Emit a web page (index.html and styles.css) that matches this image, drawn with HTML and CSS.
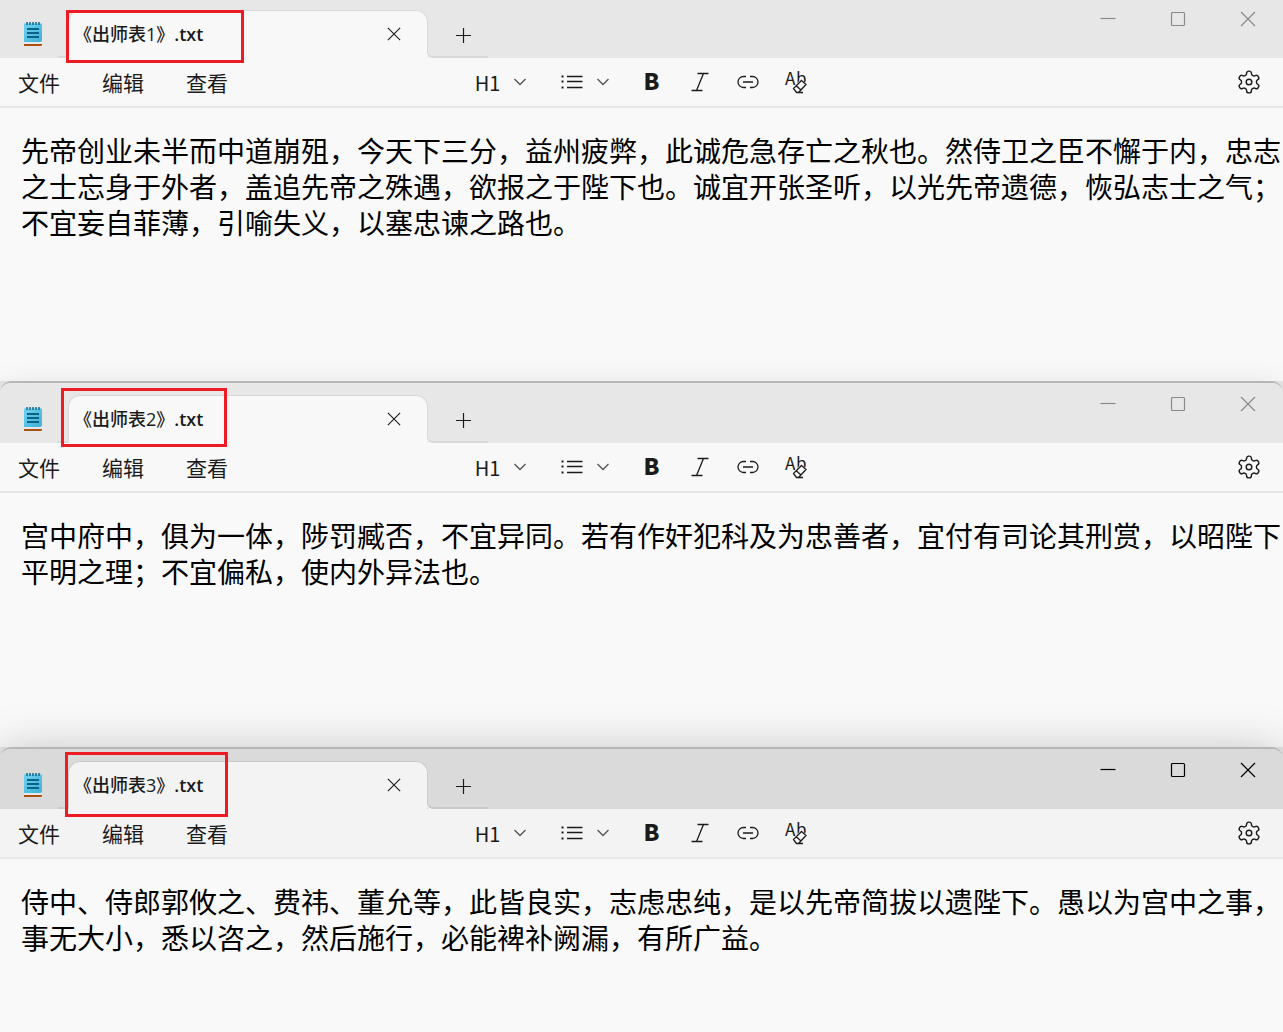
FILE: index.html
```html
<!DOCTYPE html>
<html lang="zh-CN">
<head>
  <meta charset="UTF-8" />
  <meta name="viewport" content="width=device-width, initial-scale=1" />
  <title>《出师表》</title>
  <link rel="stylesheet" href="styles.css">
</head>
<body>
  <!-- shared icons -->
  <svg class="sprite" aria-hidden="true">
    <linearGradient id="page" x1="0" y1="0" x2="1" y2="1">
      <stop offset="0" stop-color="#6fd3f2" />
      <stop offset="1" stop-color="#3fb0d3" />
    </linearGradient>
    <symbol id="notepad" viewBox="0 0 18 24">
      <path d="M0 22h18v.5q0 1.500-1.500 1.500H0z" fill="#a9500f" />
      <path d="M0 20h18v2H0z" fill="#e6e9ea" />
      <path d="M0 1.500h18V18q0 2-2 2H0z" fill="url(#page)" />
      <path d="M3 0v3M6 0v3M9 0v3M12 0v3M15 0v3" stroke="#0f6a8c" stroke-width="1.500" />
      <path d="M3 7h12M3 11h12M3 15h12" stroke="#0a6287" stroke-width="2" />
    </symbol>
    <symbol id="close" viewBox="0 0 16 16"><path d="M1 1l14 14M15 1L1 15" /></symbol>
    <symbol id="plus" viewBox="0 0 16 16"><path d="M8.500 1v15M1 8.500h15" /></symbol>
    <symbol id="minimize" viewBox="0 0 16 16"><path d="M.5 7.500h15" /></symbol>
    <symbol id="maximize" viewBox="0 0 16 16"><rect x="1.500" y="1.500" width="13" height="13" rx="1" /></symbol>
    <symbol id="chevron" viewBox="0 0 12 8"><path d="M.5 1L6 6.500 11.500 1" /></symbol>
    <symbol id="list" viewBox="0 0 22 14">
      <path d="M6 1.500h15.500M6 6.500h15.500M6 12.500h15.500" />
      <path d="M.5 1.500h2M.5 6.500h2M.5 12.500h2" stroke-width="2.200" />
    </symbol>
    <symbol id="italic" viewBox="0 0 18 20"><path d="M6.500 1.500h11M.5 18.500h11M12.500 1.500l-7 17" /></symbol>
    <symbol id="link" viewBox="0 0 22 14">
      <path d="M9 1.500H6.500a5.500 5.500 0 0 0 0 11H9M13 1.500h2.500a5.500 5.500 0 0 1 0 11H13M6 7h10" />
    </symbol>
    <symbol id="gear" viewBox="0 0 24 24">
      <path d="M12.220 2h-.44a2 2 0 0 0-2 2v.18a2 2 0 0 1-1 1.730l-.43.25a2 2 0 0 1-2 0l-.15-.08a2 2 0 0 0-2.730.73l-.22.38a2 2 0 0 0 .73 2.730l.15.1a2 2 0 0 1 1 1.720v.51a2 2 0 0 1-1 1.740l-.15.09a2 2 0 0 0-.73 2.730l.22.38a2 2 0 0 0 2.730.73l.15-.08a2 2 0 0 1 2 0l.43.25a2 2 0 0 1 1 1.730V20a2 2 0 0 0 2 2h.44a2 2 0 0 0 2-2v-.18a2 2 0 0 1 1-1.730l.43-.25a2 2 0 0 1 2 0l.15.08a2 2 0 0 0 2.730-.73l.22-.39a2 2 0 0 0-.73-2.730l-.15-.08a2 2 0 0 1-1-1.740v-.5a2 2 0 0 1 1-1.740l.15-.09a2 2 0 0 0 .73-2.730l-.22-.38a2 2 0 0 0-2.730-.73l-.15.08a2 2 0 0 1-2 0l-.43-.25a2 2 0 0 1-1-1.730V4a2 2 0 0 0-2-2z" />
      <circle cx="12" cy="12" r="2.600" />
    </symbol>
  </svg>

  <section class="window first">
    <header class="titlebar">
      <svg class="app-icon"><use href="#notepad" /></svg>
      <div class="tab">
        <span class="tab-name">《出师表1》<b>.txt</b></span>
        <button class="tab-close" aria-label="关闭标签页"><svg class="icon-14"><use href="#close" /></svg></button>
      </div>
      <button class="tab-new" aria-label="新建标签页"><svg class="icon-16"><use href="#plus" /></svg></button>
      <div class="controls">
        <button aria-label="最小化"><svg class="icon-16"><use href="#minimize" /></svg></button>
        <button aria-label="最大化"><svg class="icon-16"><use href="#maximize" /></svg></button>
        <button aria-label="关闭"><svg class="icon-16"><use href="#close" /></svg></button>
      </div>
    </header>
    <div class="toolbar">
      <nav class="menu">
        <button>文件</button>
        <button>编辑</button>
        <button>查看</button>
      </nav>
      <div class="tools">
        <button class="drop">H1<svg class="chevron"><use href="#chevron" /></svg></button>
        <button class="drop" aria-label="列表"><svg class="icon-wide"><use href="#list" /></svg><svg class="chevron"><use href="#chevron" /></svg></button>
        <button class="bold">B</button>
        <button aria-label="斜体"><svg class="icon-italic"><use href="#italic" /></svg></button>
        <button aria-label="链接"><svg class="icon-wide"><use href="#link" /></svg></button>
        <button aria-label="清除格式">
          <svg class="icon-24" viewBox="0 0 24 24">
            <text x="1" y="15" class="glyph">A</text>
            <text x="12" y="15" class="glyph">b</text>
            <path d="M17 9l6 5-8 9h-2l-4-5z" class="eraser" />
            <path d="M17.500 10.500l4.500 4-7.500 8h-2l-3-4zM12 15.500l5 4.500M13 22.500h6" />
          </svg>
        </button>
      </div>
      <button class="settings" aria-label="设置"><svg class="icon-gear"><use href="#gear" /></svg></button>
    </div>
    <textarea class="editor" aria-label="文本编辑器" spellcheck="false">先帝创业未半而中道崩殂，今天下三分，益州疲弊，此诚危急存亡之秋也。然侍卫之臣不懈于内，忠志之士忘身于外者，盖追先帝之殊遇，欲报之于陛下也。诚宜开张圣听，以光先帝遗德，恢弘志士之气；不宜妄自菲薄，引喻失义，以塞忠谏之路也。</textarea>
    <div class="mark"></div>
  </section>

  <section class="window second">
    <header class="titlebar">
      <svg class="app-icon"><use href="#notepad" /></svg>
      <div class="tab">
        <span class="tab-name">《出师表2》<b>.txt</b></span>
        <button class="tab-close" aria-label="关闭标签页"><svg class="icon-14"><use href="#close" /></svg></button>
      </div>
      <button class="tab-new" aria-label="新建标签页"><svg class="icon-16"><use href="#plus" /></svg></button>
      <div class="controls">
        <button aria-label="最小化"><svg class="icon-16"><use href="#minimize" /></svg></button>
        <button aria-label="最大化"><svg class="icon-16"><use href="#maximize" /></svg></button>
        <button aria-label="关闭"><svg class="icon-16"><use href="#close" /></svg></button>
      </div>
    </header>
    <div class="toolbar">
      <nav class="menu">
        <button>文件</button>
        <button>编辑</button>
        <button>查看</button>
      </nav>
      <div class="tools">
        <button class="drop">H1<svg class="chevron"><use href="#chevron" /></svg></button>
        <button class="drop" aria-label="列表"><svg class="icon-wide"><use href="#list" /></svg><svg class="chevron"><use href="#chevron" /></svg></button>
        <button class="bold">B</button>
        <button aria-label="斜体"><svg class="icon-italic"><use href="#italic" /></svg></button>
        <button aria-label="链接"><svg class="icon-wide"><use href="#link" /></svg></button>
        <button aria-label="清除格式">
          <svg class="icon-24" viewBox="0 0 24 24">
            <text x="1" y="15" class="glyph">A</text>
            <text x="12" y="15" class="glyph">b</text>
            <path d="M17 9l6 5-8 9h-2l-4-5z" class="eraser" />
            <path d="M17.500 10.500l4.500 4-7.500 8h-2l-3-4zM12 15.500l5 4.500M13 22.500h6" />
          </svg>
        </button>
      </div>
      <button class="settings" aria-label="设置"><svg class="icon-gear"><use href="#gear" /></svg></button>
    </div>
    <textarea class="editor" aria-label="文本编辑器" spellcheck="false">宫中府中，俱为一体，陟罚臧否，不宜异同。若有作奸犯科及为忠善者，宜付有司论其刑赏，以昭陛下平明之理；不宜偏私，使内外异法也。</textarea>
    <div class="mark"></div>
  </section>

  <section class="window third active">
    <header class="titlebar">
      <svg class="app-icon"><use href="#notepad" /></svg>
      <div class="tab">
        <span class="tab-name">《出师表3》<b>.txt</b></span>
        <button class="tab-close" aria-label="关闭标签页"><svg class="icon-14"><use href="#close" /></svg></button>
      </div>
      <button class="tab-new" aria-label="新建标签页"><svg class="icon-16"><use href="#plus" /></svg></button>
      <div class="controls">
        <button aria-label="最小化"><svg class="icon-16"><use href="#minimize" /></svg></button>
        <button aria-label="最大化"><svg class="icon-16"><use href="#maximize" /></svg></button>
        <button aria-label="关闭"><svg class="icon-16"><use href="#close" /></svg></button>
      </div>
    </header>
    <div class="toolbar">
      <nav class="menu">
        <button>文件</button>
        <button>编辑</button>
        <button>查看</button>
      </nav>
      <div class="tools">
        <button class="drop">H1<svg class="chevron"><use href="#chevron" /></svg></button>
        <button class="drop" aria-label="列表"><svg class="icon-wide"><use href="#list" /></svg><svg class="chevron"><use href="#chevron" /></svg></button>
        <button class="bold">B</button>
        <button aria-label="斜体"><svg class="icon-italic"><use href="#italic" /></svg></button>
        <button aria-label="链接"><svg class="icon-wide"><use href="#link" /></svg></button>
        <button aria-label="清除格式">
          <svg class="icon-24" viewBox="0 0 24 24">
            <text x="1" y="15" class="glyph">A</text>
            <text x="12" y="15" class="glyph">b</text>
            <path d="M17 9l6 5-8 9h-2l-4-5z" class="eraser" />
            <path d="M17.500 10.500l4.500 4-7.500 8h-2l-3-4zM12 15.500l5 4.500M13 22.500h6" />
          </svg>
        </button>
      </div>
      <button class="settings" aria-label="设置"><svg class="icon-gear"><use href="#gear" /></svg></button>
    </div>
    <textarea class="editor" aria-label="文本编辑器" spellcheck="false">侍中、侍郎郭攸之、费祎、董允等，此皆良实，志虑忠纯，是以先帝简拔以遗陛下。愚以为宫中之事，事无大小，悉以咨之，然后施行，必能裨补阙漏，有所广益。</textarea>
    <div class="mark"></div>
  </section>
</body>
</html>
```
FILE: styles.css
```css
* { box-sizing: border-box; }

body {
  margin: 0;
  min-height: 100vh;
  display: flex;
  flex-direction: column;
  background: #f0f0f0;
  font-family: "Open Sans", "Noto Sans CJK SC", sans-serif;
  color: #1b1b1b;
}

button {
  display: flex;
  align-items: center;
  justify-content: center;
  padding: 0;
  border: none;
  background: none;
  font: inherit;
  color: inherit;
}

svg {
  display: block;
  flex: none;
  fill: none;
  stroke: currentColor;
  stroke-width: 1.3;
}

.sprite { position: absolute; width: 0; height: 0; }
.icon-14 { width: 14px; height: 14px; }
.icon-16 { width: 16px; height: 16px; stroke-width: 1.2; }
.icon-24 { width: 24px; height: 24px; }
.icon-wide { width: 22px; height: 14px; }
.icon-italic { width: 18px; height: 20px; }
.icon-gear { width: 26px; height: 26px; }
.chevron { width: 12px; height: 8px; color: #555; }

.glyph {
  font: 17px "Noto Sans CJK SC", sans-serif;
  fill: currentColor;
  stroke: none;
}

.eraser { fill: #f8f8f8; stroke: none; }

/* window frame */
.window {
  --bar: #e7e7e7;
  --surface: #f8f8f8;
  --line: #d9d9d9;
  position: relative;
  border-top: 2px solid #b7b7b7;
  border-radius: 12px 12px 0 0;
  background: #f9f9f9;
  box-shadow: 0 6px 32px rgba(0, 0, 0, 0.12);
}

.window.active {
  --bar: #dadada;
  --surface: #f3f3f3;
  --line: #cbcbcb;
  flex: 1;
  box-shadow: 0 6px 48px rgba(0, 0, 0, 0.26);
}

.window.first { border-top: none; border-radius: 0; }

.titlebar {
  display: flex;
  align-items: flex-end;
  height: 60px;
  background: var(--bar);
  border-radius: 10px 10px 0 0;
}

.first .titlebar { height: 58px; border-radius: 0; }

.app-icon {
  width: 18px;
  height: 24px;
  margin: 0 26px 12px 24px;
  stroke: none;
}

.tab {
  position: relative;
  display: flex;
  align-items: center;
  justify-content: space-between;
  width: 360px;
  height: 48px;
  padding: 0 25px 2px 5px;
  border: 1px solid var(--line);
  border-bottom: none;
  border-radius: 12px 12px 0 0;
  background: var(--surface);
}

/* line that runs into the tab from the left */
.tab::before {
  content: "";
  position: absolute;
  right: 100%;
  bottom: 0;
  width: 11px;
  height: 2px;
  background: var(--line);
}

.tab-name {
  font-size: 18px;
  font-weight: 500;
  line-height: 24px;
  white-space: nowrap;
  text-spacing-trim: space-all;
}

.tab-name b { font-weight: 600; }

.tab-close { width: 16px; height: 24px; }

.tab-new {
  position: relative;
  justify-content: flex-start;
  width: 61px;
  height: 34px;
  margin-left: -1px;
  padding: 0 0 10px 27px;
  border-left: 1px solid var(--line);
  border-bottom: 2px solid var(--line);
  border-bottom-left-radius: 6px;
  background: var(--bar);
  box-shadow: -1px 1px 0 var(--surface);
}

.controls {
  display: flex;
  margin-left: auto;
  margin-bottom: 20px;
  color: #8a8a8a;
}

.controls button { width: 70px; height: 39px; }
.active .controls { color: #000; }

/* menu and formatting tools */
.toolbar {
  position: relative;
  display: grid;
  grid-template-columns: 1fr auto 1fr;
  align-items: center;
  height: 50px;
  border-bottom: 2px solid #e7e7e7;
  background: var(--surface);
}

.menu {
  display: flex;
  gap: 42px;
  padding: 2px 0 0 18px;
  font-size: 21px;
  font-weight: 400;
  line-height: 30px;
}

.tools { display: flex; padding-right: 4px; }
.tools button { width: 48px; height: 40px; }

.tools .drop {
  width: 84px;
  gap: 14px;
  padding-right: 2px;
  font-family: "Noto Sans CJK SC", sans-serif;
  font-size: 20px;
  font-weight: 400;
}

.tools .bold {
  padding-bottom: 4px;
  font-family: "Noto Sans CJK SC", sans-serif;
  font-size: 23px;
  font-weight: 900;
}

.settings { justify-self: end; width: 48px; height: 40px; margin-right: 10px; }

/* text area */
.editor {
  display: block;
  width: 100%;
  min-height: 273px;
  padding: 24px 0 0 21px;
  border: none;
  outline: none;
  resize: none;
  overflow: hidden;
  background: transparent;
  color: #000;
  font-family: "Noto Sans CJK SC", sans-serif;
  font-size: 28px;
  line-height: 36px;
  text-spacing-trim: space-all;
}

.second .editor { min-height: 254px; }
.third .editor { min-height: 173px; }

/* red highlight round the tab name */
.mark {
  position: absolute;
  top: 5px;
  left: 61px;
  width: 166px;
  height: 59px;
  border: 3px solid #ed1c24;
}

.first .mark { top: 10px; left: 66px; width: 178px; height: 53px; }
.third .mark { top: 3px; left: 65px; width: 163px; height: 65px; }
```
